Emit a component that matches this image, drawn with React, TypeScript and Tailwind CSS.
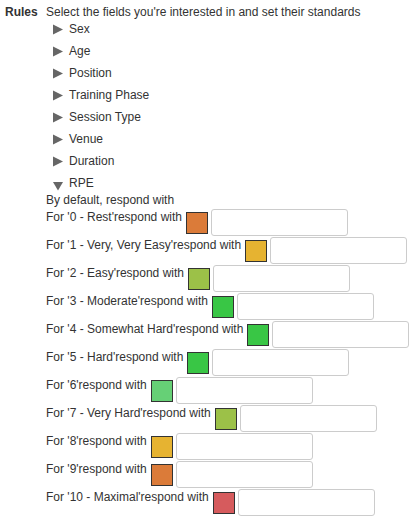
import { useState } from 'react';

const fields = ['Sex', 'Age', 'Position', 'Training Phase', 'Session Type', 'Venue', 'Duration'];

const rpe: { label: string; color: string }[] = [
  { label: "0 - Rest", color: 'bg-[#db7b39]' },
  { label: "1 - Very, Very Easy", color: 'bg-[#e6b331]' },
  { label: "2 - Easy", color: 'bg-[#9cc148]' },
  { label: "3 - Moderate", color: 'bg-[#39c645]' },
  { label: "4 - Somewhat Hard", color: 'bg-[#39c645]' },
  { label: "5 - Hard", color: 'bg-[#39c645]' },
  { label: "6", color: 'bg-[#66d076]' },
  { label: "7 - Very Hard", color: 'bg-[#9cc148]' },
  { label: "8", color: 'bg-[#e6b331]' },
  { label: "9", color: 'bg-[#db7b39]' },
  { label: "10 - Maximal", color: 'bg-[#d65b5d]' },
];

function Triangle({ open }: { open?: boolean }) {
  if (open) {
    return (
      <svg width="10" height="17" viewBox="0 0 10 17" className="shrink-0">
        <polygon points="0,7 10,7 5,15.5" fill="#666" />
      </svg>
    );
  }
  return (
    <svg width="10" height="17" viewBox="0 0 10 17" className="shrink-0">
      <polygon points="0,3.5 10,8.5 0,13.5" fill="#666" />
    </svg>
  );
}

export default function App() {
  const [values, setValues] = useState<string[]>(rpe.map(() => ''));

  return (
    <div className="min-h-screen bg-white pl-[5px] pt-[4px] text-[12px] leading-[17px] text-[#333] font-['Liberation_Sans',Arial,sans-serif]">
      <div className="flex">
        <div className="w-[41px] shrink-0 font-bold">Rules</div>
        <div className="flex flex-col">
          <div>Select the fields you're interested in and set their standards</div>

          {/* collapsed fields */}
          <ul className="flex flex-col gap-[5px] pl-[7px]">
            {fields.map((f) => (
              <li key={f} className="flex gap-[6px]">
                <Triangle />
                <span>{f}</span>
              </li>
            ))}
            <li className="flex gap-[6px]">
              <Triangle open />
              <span>RPE</span>
            </li>
          </ul>

          {/* RPE expanded */}
          <div>By default, respond with</div>
          <div className="flex flex-col">
            {rpe.map((r, i) => (
              <div key={r.label} className="flex h-[28px] items-start">
                <span className="whitespace-nowrap">For '{r.label}'respond with</span>
                <span className={`ml-[4px] mt-[3px] h-[22px] w-[22px] shrink-0 border border-[#333] ${r.color}`} />
                <input
                  className="ml-[3px] h-[27px] w-[137px] shrink-0 rounded-[3px] border border-[#ccc] bg-white px-2 outline-none"
                  value={values[i]}
                  onChange={(e) => {
                    const next = [...values];
                    next[i] = e.target.value;
                    setValues(next);
                  }}
                />
              </div>
            ))}
          </div>
        </div>
      </div>
    </div>
  );
}
